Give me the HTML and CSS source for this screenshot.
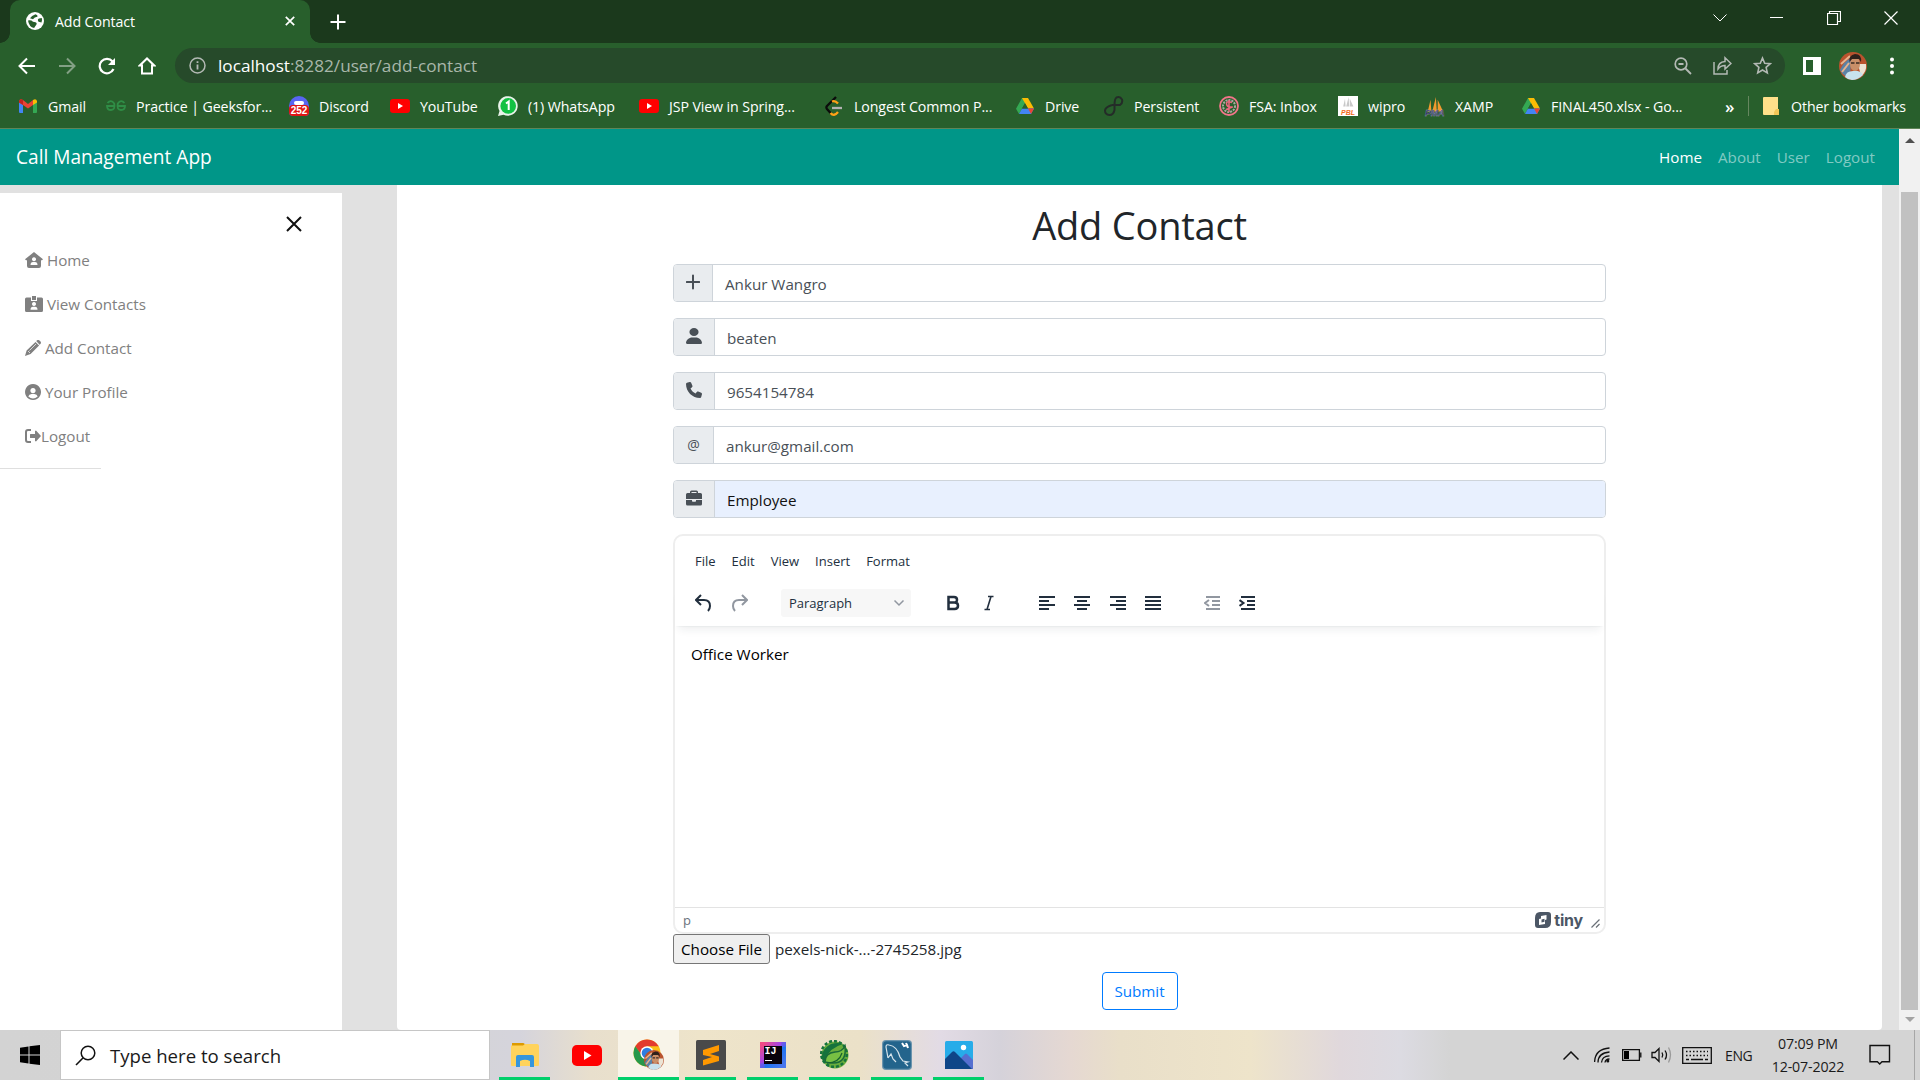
FILE: index.html
```html
<!DOCTYPE html>
<html lang="en">
<head>
<meta charset="utf-8">
<title>Add Contact</title>
<link rel="stylesheet" href="styles.css">
</head>
<body>
<svg class="defs" width="0" height="0" aria-hidden="true">
  <symbol id="i-youtube" viewBox="0 0 20 14"><rect width="20" height="14" rx="3.2" fill="#f00"/><path d="M8 4l5 3-5 3z" fill="#fff"/></symbol>
  <symbol id="i-drive" viewBox="0 0 18 16"><path d="M6 0h6l-6 10.5L3 16 0 10.7z" fill="#34a853"/><path d="M6 0h6l6 10.5h-6z" fill="#fbbc04"/><path d="M3 16l3-5.5h12L15 16z" fill="#4285f4"/><path d="M12 10.5h6L15 16z" fill="#ea4335"/><path d="M9 5.3l3 5.2H6z" fill="#285f2c"/></symbol>
  <symbol id="i-sails" viewBox="0 0 20 20"><path d="M5 3l-3 13h4zM11 0L7 16h5zM13 3l6 13h-6z"/></symbol>
  <symbol id="i-face" viewBox="0 0 28 28"><circle cx="14" cy="14" r="14" fill="#b9532e"/><path d="M1 18Q5 9 12 6l-1 20Q4 24 1 18z" fill="#5b82a6"/><path d="M2 12L11 4M3 20l7-9" stroke="#e7b38d" stroke-width="2"/><path d="M19 12l8 0q1 8-5 12z" fill="#ece4d5"/><path d="M6 25q1-6 8-6 7-1 10 4-5 5-11 5-4 0-7-3z" fill="#c8e2ee"/><ellipse cx="16" cy="12" rx="5" ry="7" fill="#c98f68"/><path d="M10.500 10q-1-7 5.500-8 7 0 6 8l-2-3h-7z" fill="#2f211b"/><path d="M12 11h3.500m1.500 0h3.500" stroke="#3a2b22" stroke-width="1.600"/></symbol>
</svg>

<header class="browser">
  <div class="tabstrip">
    <div class="tab">
      <svg width="18" height="18" viewBox="0 0 18 18"><circle cx="9" cy="9" r="9" fill="#fff"/><path d="M9.500 2.200Q5.500 3.500 4 6.200l3 1q1.500-2.600 4.500-2.500Q12 3 9.500 2.200zM2 8.500q3-.8 5 1.200l2.500.5q2 .8.600 2.800l-2 3Q3 15 2 8.500zM13 6.500q-2 1-.5 3.300l3 .7q1-2 .3-4.500z" fill="#285f2c"/></svg>
      <span class="tab-title">Add Contact</span>
      <svg width="10" height="10" viewBox="0 0 10 10" class="line"><path d="M.8.8l8.400 8.400M9.200.8L.8 9.200" stroke-width="1.700"/></svg>
    </div>
    <svg class="newtab line" width="16" height="16" viewBox="0 0 16 16"><path d="M8 .5v15M.5 8h15" stroke-width="2"/></svg>
    <div class="window-controls">
      <svg width="14" height="14" viewBox="0 0 14 14" class="line"><path d="M.5 3.500L7 10l6.500-6.500" stroke-width="1"/></svg>
      <svg width="14" height="14" viewBox="0 0 14 14" class="line"><path d="M0 6.500h13" stroke-width="1"/></svg>
      <svg width="14" height="14" viewBox="0 0 14 14" class="line"><path d="M.5 2.500h10v11H.5zM2.500 2.500v-2h11v10h-3" stroke-width="1.200"/></svg>
      <svg width="14" height="14" viewBox="0 0 14 14" class="line"><path d="M.5.5l13 13M13.500.5l-13 13" stroke-width="1.200"/></svg>
    </div>
  </div>

  <div class="toolbar">
    <div class="nav-buttons">
      <svg width="18" height="18" viewBox="0 0 18 18" class="line"><path d="M17 9H2M9 1.500L1.500 9 9 16.500" stroke-width="2"/></svg>
      <svg width="18" height="18" viewBox="0 0 18 18" class="line dim"><path d="M1 9h15M9 1.500L16.500 9 9 16.500" stroke-width="2"/></svg>
      <svg width="18" height="18" viewBox="0 0 18 18" class="line"><path d="M15.500 12A7.200 7.200 0 1 1 14.500 4.500" stroke-width="2.200"/><path d="M17 1v7h-7z" fill="#fff" stroke="none"/></svg>
      <svg width="18" height="18" viewBox="0 0 18 18" class="line"><path d="M4 16.500V8.500H1.800L9 1.500l7.200 7H14v8z" stroke-width="2"/></svg>
    </div>
    <div class="omnibox">
      <svg width="17" height="17" viewBox="0 0 17 17" class="line grey"><circle cx="8.500" cy="8.500" r="7.500" stroke-width="1.500"/><path d="M8.500 7.500v5M8.500 4.200v1.700" stroke-width="1.800"/></svg>
      <span class="url"><b>localhost</b>:8282/user/add-contact</span>
      <div class="omni-actions">
        <svg width="18" height="18" viewBox="0 0 18 18" class="line grey"><circle cx="7" cy="7" r="5.800" stroke-width="1.700"/><path d="M11.500 11.500L17 17M4.500 7h5" stroke-width="1.800"/></svg>
        <svg width="19" height="19" viewBox="0 0 19 19" class="line grey"><path d="M1 6v12h13v-4M5 13q0-7 7-7.500V1.800L18 7.500l-6 5.500V9.500Q7.500 9.500 5 13z" stroke-width="1.500"/></svg>
        <svg width="19" height="19" viewBox="0 0 19 19" class="line grey"><path d="M9.500 2l2.200 5.200 5.600.5-4.200 3.700 1.200 5.500-4.800-2.900-4.800 2.900 1.200-5.500L1.700 7.700l5.600-.5z" stroke-width="1.600"/></svg>
      </div>
    </div>
    <div class="toolbar-end">
      <svg width="18" height="18" viewBox="0 0 18 18"><path d="M0 0h18v18H0zM3 3v12h7V3z" fill="#fff" fill-rule="evenodd"/></svg>
      <svg width="28" height="28"><use href="#i-face"/></svg>
      <svg width="4" height="18" viewBox="0 0 4 18" fill="#fff"><circle cx="2" cy="2.500" r="2"/><circle cx="2" cy="9" r="2"/><circle cx="2" cy="15.500" r="2"/></svg>
    </div>
  </div>

  <div class="bookmarks">
    <a><span class="fav"><svg width="18" height="14" viewBox="0 0 18 14"><path d="M0 2v11q0 1 1 1h3V5z" fill="#4285f4"/><path d="M18 2v11q0 1-1 1h-3V5z" fill="#34a853"/><path d="M0 2q1-3 4-1l5 4 5-4v5L9 9.500 4 6 0 3.500z" fill="#ea4335"/><path d="M14 1q3-2 4 1v1.500L14 6z" fill="#fbbc04"/><path d="M0 2q1-3 4-1v5L0 3.500z" fill="#c5221f"/></svg></span>Gmail</a>
    <a><span class="fav"><svg width="20" height="12" viewBox="0 0 20 12" class="line gfg"><path d="M1.500 3Q5-1 8.200 3.500 9.500 10 5 10 1 10 1 6h8M18.500 3Q15-1 11.800 3.500 10.500 10 15 10q4 0 4-4h-8" stroke-width="1.800"/></svg></span>Practice | Geeksfor...</a>
    <a><span class="fav discord"><span class="count">252</span></span>Discord</a>
    <a><span class="fav"><svg width="20" height="14"><use href="#i-youtube"/></svg></span>YouTube</a>
    <a><span class="fav"><svg width="20" height="20" viewBox="0 0 20 20"><path d="M0 20l1.500-5A9.800 9.800 0 1 1 5.500 18.700z" fill="#e9f3ea"/><circle cx="10.200" cy="9.900" r="7.800" fill="#12c143"/><path d="M8 7.500l2.700-2V14" fill="none" stroke="#fff" stroke-width="2"/></svg></span>(1) WhatsApp</a>
    <a><span class="fav"><svg width="20" height="14"><use href="#i-youtube"/></svg></span>JSP View in Spring...</a>
    <a><span class="fav"><svg width="18" height="20" viewBox="0 0 18 20" class="line"><path d="M11 1L2 10q-1.200 1.500 0 3l4 4.500" stroke="#0b0b0b" stroke-width="2.300"/><path d="M7 5.500q3-1.500 6 2M5.500 17q3.500 4 7.500-1" stroke="#ffa116" stroke-width="2.300"/><path d="M7 12h10" stroke="#b3b3b3" stroke-width="2.300"/></svg></span>Longest Common P...</a>
    <a><span class="fav"><svg width="18" height="16"><use href="#i-drive"/></svg></span>Drive</a>
    <a><span class="fav"><svg width="20" height="20" viewBox="0 0 20 20" class="line"><path d="M8 9h8q3-2 2-5.500Q16 0 12.500 1.500 10.500 3 10.500 9v5q-1 5-5 5Q1 18.500 1 14.500 1.500 11 8 9" stroke="#242c28" stroke-width="2"/></svg></span>Persistent</a>
    <a><span class="fav"><svg width="20" height="20" viewBox="0 0 20 20" class="line"><circle cx="10" cy="10" r="9" stroke="#f2758a" stroke-width="1.800"/><circle cx="10" cy="10" r="6" stroke="#a7aaa1" stroke-width="2" stroke-dasharray="2 1"/><path d="M13 6.500Q7 4.500 7.500 8T12 11t-5 2.500M10 4v12" stroke="#ee6680" stroke-width="1.500"/></svg></span>FSA: Inbox</a>
    <a><span class="fav wipro"><svg width="14" height="12" fill="#c9c9c9"><use href="#i-sails"/></svg><i>PBL</i></span>wipro</a>
    <a><span class="fav xamp"><svg width="20" height="18" fill="#f29a2e"><use href="#i-sails"/></svg><i>PMA</i></span>XAMP</a>
    <a><span class="fav"><svg width="18" height="16"><use href="#i-drive"/></svg></span>FINAL450.xlsx - Go...</a>
    <span class="more">»</span>
    <a class="other"><span class="folder"><svg width="16" height="18" viewBox="0 0 16 18"><path d="M0 1q0-1 1-1h14v13l1 1v3q0 1-1 1H1q-1 0-1-1z" fill="#ffe08a"/><path d="M11 18v-3l2-3h3v6z" fill="#f3c758"/></svg></span>Other bookmarks</a>
  </div>
</header>

<div class="viewport">
  <div class="page">
    <nav class="navbar">
      <span class="brand">Call Management App</span>
      <div class="links"><a class="active">Home</a><a>About</a><a>User</a><a>Logout</a></div>
    </nav>
    <div class="columns">
      <aside class="sidebar">
        <div class="close"><svg width="16" height="16" viewBox="0 0 16 16"><path d="M1 1l14 14M15 1L1 15" stroke="#111" stroke-width="2"/></svg></div>
        <a><svg width="18" height="16" viewBox="0 0 18 16"><path d="M9 0l9 7.300-1 1h-1V14q0 2-2 2H4q-2 0-2-2V8.300H1l-1-1zM9 5.200a2 2 0 1 0 .01 0zM5.500 13h7q0-3-2.500-3H8q-2.500 0-2.500 3z" fill-rule="evenodd"/></svg>&nbsp;Home</a>
        <a><svg width="18" height="16" viewBox="0 0 18 16"><path d="M7 0h4v4H7zM0 3q0-1.500 1.500-1.500H6V5h6V1.500h4.500Q18 1.500 18 3v11.500Q18 16 16.500 16h-15Q0 16 0 14.500zM9 6a2 2 0 1 0 .01 0zM5.500 13.800h7q0-3-2.500-3H8q-2.500 0-2.500 3z" fill-rule="evenodd"/></svg>&nbsp;View Contacts</a>
        <a><svg width="16" height="16" viewBox="0 0 16 16"><path d="M11.200 1L12.500 0q1-.4 2 .6l1 1q.9 1 .1 2.100L14.600 4.800zM10.500 1.900l3.600 3.600-8.500 8.500L0 16l1.600-5.500z"/><path d="M3 11l2 2M4.500 10.500L11 4" stroke="#fff" stroke-width=".7"/></svg>&nbsp;Add Contact</a>
        <a><svg width="16" height="16" viewBox="0 0 16 16"><path d="M8 0a8 8 0 1 0 .01 0zM8 4a2.600 2.600 0 1 1-.01 0zM3.300 12.500q.7-2.500 3.300-2.500h2.800q2.600 0 3.300 2.500Q8 16.500 3.300 12.500z" fill-rule="evenodd"/></svg>&nbsp;Your Profile</a>
        <a><svg width="16" height="16" viewBox="0 0 16 16"><path d="M6 2H3Q1 2 1 4v8q0 2 2 2h3" fill="none" stroke="#808080" stroke-width="2"/><path d="M5.500 6H10V3l1-.5L16 8l-5 5.500-1-.5v-3H5.500Q5 10 5 9.500v-3Q5 6 5.500 6z"/></svg>Logout</a>
        <div class="rule"></div>
      </aside>

      <main class="card">
        <form class="form">
          <h1>Add Contact</h1>
          <div class="group"><span class="addon narrow"><svg width="14" height="16" viewBox="0 0 14 16"><path d="M7 1.500v13M.8 8h12.400" stroke="#495057" stroke-width="2" stroke-linecap="round"/></svg></span><span class="field">Ankur Wangro</span></div>
          <div class="group"><span class="addon"><svg width="16" height="16" viewBox="0 0 448 512" preserveAspectRatio="none"><path d="M224 256A128 128 0 1 0 224 0a128 128 0 1 0 0 256zm-45.700 48C79.800 304 0 383.800 0 482.300C0 498.700 13.300 512 29.700 512H418.300c16.400 0 29.700-13.300 29.700-29.700C448 383.800 368.200 304 269.700 304H178.300z"/></svg></span><span class="field">beaten</span></div>
          <div class="group"><span class="addon"><svg width="16" height="16" viewBox="0 0 512 512"><path d="M164.900 24.600c-7.700-18.600-28-28.500-47.400-23.200l-88 24C12.100 30.200 0 46 0 64C0 311.400 200.600 512 448 512c18 0 33.800-12.100 38.600-29.500l24-88c5.300-19.400-4.600-39.700-23.200-47.400l-96-40c-16.300-6.800-35.200-2.100-46.300 11.600L304.700 368C234.300 334.700 177.300 277.700 144 207.300L193.300 167c13.700-11.200 18.400-30 11.600-46.300l-40-96z"/></svg></span><span class="field digits">9654154784</span></div>
          <div class="group"><span class="addon mid">@</span><span class="field">ankur@gmail.com</span></div>
          <div class="group"><span class="addon"><svg width="16" height="16" viewBox="0 0 16 16"><path d="M4 3V2q0-1.500 1.500-1.500h5Q12 .5 12 2v1h2.500Q16 3 16 4.500V9H0V4.500Q0 3 1.500 3zM5.500 3h5V2h-5zM0 10h6v1q0 .8.800.8h2.400q.8 0 .8-.8v-1h6v4q0 1.500-1.500 1.500h-13Q0 15.500 0 14z" fill-rule="evenodd"/></svg></span><span class="field filled">Employee</span></div>

          <section class="editor">
            <div class="menubar"><span class="m1">File</span><span class="m2">Edit</span><span class="m3">View</span><span class="m4">Insert</span><span>Format</span></div>
            <div class="tools">
              <svg width="16" height="18" viewBox="0 0 16 18"><path d="M6 1L1 6l5 5M1.500 6H9q6 0 6 6 0 3-2 5" /></svg>
              <svg class="off redo" width="16" height="18" viewBox="0 0 16 18"><path d="M10 1l5 5-5 5M14.500 6H7q-6 0-6 6 0 3 2 5"/></svg>
              <div class="select"><span>Paragraph</span><svg class="off" width="12" height="8" viewBox="0 0 12 8"><path d="M1.500 1.500L6 6l4.500-4.500" stroke-width="1.500"/></svg></div>
              <svg class="bold" width="14" height="16" viewBox="0 0 14 16"><path d="M2.500 2H8q3 0 3 2.800T8 7.600H2.500zM2.500 7.600h6q3.500 0 3.500 3.200T8.500 14h-6z" stroke-width="2.500"/></svg>
              <svg class="italic" width="10" height="16" viewBox="0 0 10 16"><path d="M4 1.500h5.500M.5 14.500H6M7 1.500L3 14.500" stroke-width="1.600"/></svg>
              <svg class="al" width="16" height="14" viewBox="0 0 16 14"><path d="M0 1h16M0 5h10M0 9h16M0 13h10"/></svg>
              <svg width="16" height="14" viewBox="0 0 16 14"><path d="M0 1h16M3 5h10M0 9h16M3 13h10"/></svg>
              <svg width="16" height="14" viewBox="0 0 16 14"><path d="M0 1h16M6 5h10M0 9h16M6 13h10"/></svg>
              <svg width="16" height="14" viewBox="0 0 16 14"><path d="M0 1h16M0 5h16M0 9h16M0 13h16"/></svg>
              <svg class="off ind" width="16" height="14" viewBox="0 0 16 14"><path d="M2 1h14M8 5h8M8 9h8M2 13h14M5 4L1 7l4 3"/></svg>
              <svg width="16" height="14" viewBox="0 0 16 14"><path d="M2 1h14M8 5h8M8 9h8M2 13h14M.5 4l4 3-4 3"/></svg>
            </div>
            <div class="content">Office Worker</div>
            <div class="status">
              <span>p</span>
              <span class="tiny"><svg width="16" height="16" viewBox="0 0 16 16"><path d="M5 0h8q3 0 3 3v7q0 6-6 6H3q-3 0-3-3V6q0-6 5-6zM6 4l5.500-1v4.500L10 8v4l-6 1V7l2-.5zM6.500 7.500v3l3-.8v-3z" fill-rule="evenodd"/></svg><b>tiny</b></span>
              <svg class="grip" width="9" height="9" viewBox="0 0 9 9"><path d="M.5 8.500l8-8M5 8.500L8.500 5" stroke="#6a7078" stroke-width="1.200"/></svg>
            </div>
          </section>

          <div class="file"><span class="choose">Choose File</span><span class="filename">pexels-nick-...-2745258.jpg</span></div>
          <div class="actions"><span class="submit">Submit</span></div>
        </form>
      </main>
    </div>
  </div>
  <div class="scrollbar"><i class="up"></i><div class="thumb"></div><i class="down"></i></div>
</div>

<footer class="taskbar">
  <div class="start"><svg width="20" height="20" viewBox="0 0 20 20"><path d="M0 2.700L8.500 1.400v8.100H0zM9.500 1.300L20 0v9.500H9.500zM0 10.500h8.500v8.100L0 17.300zM9.500 10.500H20V20L9.500 18.700z"/></svg></div>
  <div class="search"><svg width="21" height="21" viewBox="0 0 21 21"><circle cx="13" cy="8" r="6.800" fill="none" stroke="#111" stroke-width="1.500"/><path d="M8.200 12.800L1 20" stroke="#111" stroke-width="1.600"/></svg><span>Type here to search</span></div>
  <div class="apps">
    <div class="app open"><svg width="28" height="24" viewBox="0 0 28 24"><path d="M1 0h11q2 0 2 3H1z" fill="#dd9a00"/><path d="M0 2.500h12L14 1h12q2 0 2 2v19q0 1-1 1H1q-1 0-1-1z" fill="#ffd35c"/><path d="M5 24V14q0-2 2-2h14q2 0 2 2v10h-4v-6q-5-2.500-10 0v6z" fill="#3696dc"/></svg></div>
    <div class="app"><svg width="30" height="21"><use href="#i-youtube"/></svg></div>
    <div class="app open active"><svg width="32" height="32" viewBox="0 0 32 32"><circle cx="14" cy="14" r="13.500" fill="#fbc116"/><path d="M2.300 7.300A13.500 13.500 0 0 1 25.700 7.300H14L9 17z" fill="#e33b2e"/><path d="M2.300 7.300A13.500 13.500 0 0 0 13 27.500L19 17l-10-.5z" fill="#26984b"/><circle cx="14" cy="14" r="6.700" fill="#fff"/><circle cx="14" cy="14" r="5.300" fill="#2f7de1"/><svg x="11" y="11" width="20" height="20"><use href="#i-face"/></svg></svg></div>
    <div class="app open"><svg width="30" height="30" viewBox="0 0 30 30"><rect width="30" height="30" rx="1.500" fill="#4a4a4a"/><path d="M7 10l16-5v6l-9 3 9 2.500V21L7 25.500V20l9-3-9-2z" fill="#ff9800"/></svg></div>
    <div class="app open"><span class="ij">IJ</span></div>
    <div class="app open"><svg width="30" height="30" viewBox="0 0 30 30"><circle cx="15" cy="15" r="13.500" fill="#69ad3c"/><circle cx="14" cy="14" r="12.800" fill="none" stroke="#15733c" stroke-width="2.500" stroke-dasharray="3 2" pathLength="80"/><path d="M3 22Q-1 10 11 4q7-2 12 0-14 4-17 15z" fill="#15733c"/><path d="M5 22Q5 13 15 12q7 0 10-6 2 17-12 17-4 0-8-1z" fill="#78c043" stroke="#1b6b38" stroke-width="1.500"/><path d="M7 23q12 0 15-10" stroke="#17612f" stroke-width="1.200" fill="none"/></svg></div>
    <div class="app open"><svg width="30" height="30" viewBox="0 0 30 30"><rect width="30" height="30" rx="4" fill="#6b94ad"/><rect x="1.200" y="1.200" width="27.600" height="27.600" rx="3" fill="#23648c"/><path d="M6 18L4 7q0-3 3-2 8 1 11 12l3 4 5 1-3 1 3 3M6 18l3-4 2 5 3 3" fill="none" stroke="#d8e5ec" stroke-width="1.200"/><path d="M20 3l2 3 3-1 1 3-2-5" fill="none" stroke="#fff" stroke-width="2"/></svg></div>
    <div class="app open"><svg width="28" height="28" viewBox="0 0 28 28"><rect width="28" height="28" rx="1.500" fill="#27ace9"/><path d="M16 17l4-4q1-1 2 0l6 6v9H16z" fill="#566fd0"/><path d="M0 18l7-7q1.500-1.500 3 0l17 17H0z" fill="#0f4688"/><circle cx="18.500" cy="6.500" r="2.700" fill="#fff"/></svg></div>
  </div>
  <div class="tray">
    <svg class="chev" width="16" height="9" viewBox="0 0 16 9"><path d="M.5 8.500L8 1l7.500 7.500" stroke-width="1.500"/></svg>
    <svg class="wifi" width="16" height="16" viewBox="0 0 16 16"><path d="M.6 15Q1 2 15.500 1M4 15.500Q4 6 15.500 5M7.500 15.500Q8 9 15.500 8.800M11 15.500q.3-3.300 4.500-3.500"/><circle cx="13.800" cy="14" r="1.500" fill="#111" stroke="none"/></svg>
    <svg class="batt" width="20" height="12" viewBox="0 0 20 12"><path d="M.6.600h16.800v10.800H.6zM18.800 3.500v5"/><path d="M2 2h5v8H2z" fill="#000" stroke="none"/></svg>
    <svg class="spk" width="22" height="18" viewBox="0 0 22 18"><path d="M1 6.500h3L8 2.500v13l-4-4H1zM11 6.500q1.500 2.500 0 5M14 4.500q3 4.500 0 9"/><path d="M17.500 1.500q4 7 0 15" stroke="#999"/></svg>
    <svg class="kbd" width="30" height="17" viewBox="0 0 30 17"><path d="M.7.700h28.600v15.600H.7z"/><path d="M4 4.500h22M4 8.500h22" stroke-dasharray="1.500 2"/><path d="M4 12.500h3m2 0h12m2 0h3"/></svg>
    <span class="lang">ENG</span>
    <div class="clock"><span>07:09 PM</span><span>12-07-2022</span></div>
    <svg class="note" width="22" height="22" viewBox="0 0 22 22"><path d="M1 1.500h19.500v16.300H13L10.700 20l-2.300-2.200H1z" stroke-width="1.400"/></svg>
    <div class="peek"></div>
  </div>
</footer>
</body>
</html>
```
FILE: styles.css
```css
* { box-sizing: border-box; }
body {
  margin: 0;
  width: 1920px;
  height: 1080px;
  overflow: hidden;
  display: flex;
  flex-direction: column;
  font-family: "Open Sans", "Noto Sans", sans-serif;
  font-size: 15.200px;
  color: #212529;
}
svg { display: block; flex: none; }
.defs { position: absolute; }
.line { fill: none; stroke: #fff; }
.line.grey { stroke: #b3b9b4; }
.line.dim { stroke: #83a085; }
.line.gfg { stroke: #2f8d46; }

/* browser chrome */
.browser { height: 129px; background: #285f2c; color: #fff; border-bottom: 1px solid #5f8558; flex: none; }
.tabstrip { height: 43px; background: #1b391c; display: flex; align-items: center; }
.tab {
  position: relative;
  width: 300px; height: 43px;
  margin-left: 10px; padding: 0 15px 1px 16px;
  background: #285f2c;
  border-radius: 10px 10px 0 0;
  display: flex; align-items: center;
}
.tab::before, .tab::after { content: ""; position: absolute; bottom: 0; width: 10px; height: 10px; }
.tab::before { left: -10px; background: radial-gradient(circle at 0 0, #1b391c 9.500px, #285f2c 10px); }
.tab::after { right: -10px; background: radial-gradient(circle at 100% 0, #1b391c 9.500px, #285f2c 10px); }
.tab-title { flex: 1; margin-left: 11px; font-size: 14.200px; letter-spacing: -.1px; }
.newtab { margin-left: 20px; }
.window-controls { margin-left: auto; display: flex; gap: 43px; padding: 0 22px 7px 0; }
.toolbar { height: 45px; display: flex; align-items: center; }
.nav-buttons { width: 175px; padding-left: 18px; display: flex; gap: 22px; }
.omnibox {
  width: 1610px; height: 35px;
  margin-top: 0;
  padding: 0 13px 0 14px;
  border-radius: 18px;
  background: #264a2a;
  display: flex; align-items: center;
}
.url { margin-left: 12px; font-size: 17.200px; color: #a9b7aa; white-space: nowrap; }
.url b { font-weight: 400; color: #fff; }
.omni-actions { margin-left: auto; display: flex; align-items: center; gap: 21px; }
.toolbar-end { margin-left: 18px; display: flex; align-items: center; gap: 18px; }
.toolbar-end svg:last-child { margin-left: 5px; }
.bookmarks {
  height: 36px; padding-left: 18px;
  display: grid; align-items: center;
  grid-template-columns: 88px 183px 101px 108px 141px 185px 191px 89px 115px 119px 87px 96px 203px 24px 158px;
  font-size: 14.200px; letter-spacing: -.1px;
}
.bookmarks a { display: flex; align-items: center; white-space: nowrap; }
.fav { width: 20px; height: 20px; margin-right: 10px; display: flex; align-items: center; justify-content: center; flex: none; }
.discord { position: relative; background: #5865f2; border-radius: 10px 10px 4px 4px; }
.discord::before { content: ""; position: absolute; top: 5px; width: 10px; height: 4px; border-radius: 3px; background: #fff; }
.count { position: absolute; left: 0; bottom: 0; width: 20px; height: 11px; border-radius: 4px; background: #e01414; font: 700 10px/11px "Liberation Sans", sans-serif; letter-spacing: 0; text-align: center; }
.wipro { background: #fff; flex-direction: column; }
.fav i { font: italic 700 7px/7px "Liberation Sans", sans-serif; letter-spacing: 0; color: #f26b1d; }
.xamp { position: relative; }
.xamp i { position: absolute; bottom: -1px; left: 0; font-size: 9px; line-height: 8px; letter-spacing: -.3px; color: #2e2d5c; -webkit-text-stroke: .3px #aaa6cc; }
.more { font-size: 17px; font-weight: 600; padding-left: 1px; }
.other { height: 20px; border-left: 1px solid #66875f; padding-left: 14px; }
.folder { margin-right: 12px; }

/* page */
.viewport { flex: 1; display: flex; min-height: 0; }
.page { width: 1899px; display: flex; flex-direction: column; background: #e1e1e1; }
.navbar { height: 56px; flex: none; background: #009688; display: flex; justify-content: space-between; align-items: center; padding: 0 24px 0 16px; }
.brand { font-size: 19.100px; color: #fff; padding-bottom: 1px; }
.links { display: flex; gap: 16px; color: #80cac3; }
.links .active { color: #fff; }
.columns { flex: 1; display: flex; min-height: 0; }
.sidebar { width: 342px; margin-top: 8px; background: #fff; color: #808080; fill: #808080; }
.close { padding: 23px 40px 0 0; height: 45px; display: flex; justify-content: flex-end; }
.sidebar a { height: 44px; padding-left: 25px; display: flex; align-items: center; }
.rule { width: 101px; height: 1px; margin-top: 10px; background: #dfdfdf; }
.card { width: 1485px; margin-left: 55px; background: #fff; border-radius: 0 0 4px 4px; padding-left: 276px; }
.form { width: 933px; }
h1 { margin: 0; padding-top: 14px; height: 79px; text-align: center; font-size: 38px; line-height: 52px; font-weight: 500; letter-spacing: -.2px; }
.group { height: 38px; margin-bottom: 16px; display: flex; border: 1px solid #ced4da; border-radius: 4px; overflow: hidden; color: #495057; }
.addon { width: 41px; background: #e9ecef; border-right: 1px solid #ced4da; display: flex; align-items: center; justify-content: center; fill: #495057; padding-bottom: 2px; font-size: 14px; }
.addon.narrow { width: 39px; }
.addon.mid { width: 40px; }
.field { flex: 1; padding: 2px 12px 0; display: flex; align-items: center; }
.filled { background: #e8f0fe; color: #111; }

.editor { height: 400px; border: 2px solid #eee; border-radius: 10px; display: flex; flex-direction: column; color: #222f3e; margin-top: 0; }
.menubar { height: 48px; padding: 2px 0 0 20px; display: flex; align-items: center; font-size: 13px; }
.menubar span { margin-right: 16px; }
.tools { height: 42px; padding: 0 20px 4px; display: flex; align-items: center; box-shadow: 0 2px 2px -2px rgba(34,47,62,.1), 0 8px 8px -4px rgba(34,47,62,.07); }
.tools svg { fill: none; stroke: #222f3e; stroke-width: 2; margin-right: 19.300px; }
.tools .off { stroke: #9197a0; }
.tools svg.redo { margin: 0 33px 0 1.700px; }
.select { width: 130px; height: 28px; padding: 0 6px 0 8px; background: #f7f7f7; border-radius: 3px; display: flex; align-items: center; justify-content: space-between; font-size: 13px; }
.tools .select svg { margin: 0; }
.tools svg.bold { margin: 0 24px 0 35px; }
.tools svg.italic { margin-right: 45px; }
.tools svg.ind { margin-left: 24px; }
.content { flex: 1; padding: 17px 16px; line-height: 22px; color: #000; }
.status { height: 25px; border-top: 1px solid #e3e3e3; padding: 0 4px 0 8px; display: flex; align-items: center; font-size: 13px; color: #6a727c; }
.tiny { margin-left: auto; display: flex; align-items: center; gap: 3px; fill: #4c5766; color: #4c5766; }
.tiny b { font: 700 16px/16px "Inter", sans-serif; letter-spacing: -.2px; }
.grip { margin: 6px 0 0 8px; }
.file { height: 30px; display: flex; align-items: center; gap: 5px; }
.choose { width: 97px; height: 30px; border: 1px solid #767676; border-radius: 3px; background: #efefef; color: #000; display: flex; align-items: center; justify-content: center; white-space: nowrap; }
.actions { display: flex; justify-content: center; padding-top: 8px; }
.submit { width: 76px; height: 38px; border: 1px solid #007bff; border-radius: 4px; color: #007bff; display: flex; align-items: center; justify-content: center; }

.scrollbar { width: 21px; background: #f1f1f1; display: flex; flex-direction: column; align-items: center; padding: 9px 0 8px; }
.scrollbar i { border: 5px solid transparent; height: 0; }
.up { border-top: 0 !important; border-bottom-color: #505050 !important; }
.down { border-bottom: 0 !important; border-top-color: #a3a3a3 !important; }
.thumb { width: 17px; flex: 1; margin: 49px 0 7px; background: #c1c1c1; }

/* taskbar */
.taskbar {
  height: 50px; flex: none; display: flex; color: #1a1a1a;
  background: linear-gradient(90deg, #d3d3d3 0, #d4d4d4 420px, #d5d4dc 520px, #e8dfcd 590px, #eee4ca 700px, #ebe1c8 860px, #e2dbe5 940px, #d5d2da 1000px, #e5d8d2 1070px, #e9dfc9 1120px, #eee4ca 1250px, #e0d8dc 1340px, #dcdbe2 1400px, #d4d4d4 1450px);
}
.start { width: 60px; display: flex; align-items: center; justify-content: center; }
.search { width: 430px; border: 1px solid #c6c6c6; background: #fff; padding-left: 14px; display: flex; align-items: center; gap: 14px; font-size: 18.600px; }
.apps { display: flex; margin-left: 9px; gap: 11px; }
.app { width: 51px; display: flex; align-items: center; justify-content: center; border-bottom: 3px solid transparent; padding-top: 3px; }
.app.open { border-color: #00cf6b; }
.app.active { width: 61px; background: #f8f4e9; margin: 0 -5px; }
.ij { width: 26px; height: 26px; border: 4px solid; border-image: linear-gradient(135deg, #f34b82, #a345e6 45%, #1d74ef 55%, #4b77ee) 1; background: #08030b; color: #fff; font: 700 10px/11px "Liberation Mono", monospace; padding-left: 1px; }
.ij::after { content: ""; display: block; width: 7px; height: 1px; margin-top: 3px; background: #fff; }
.tray { margin-left: auto; display: flex; align-items: center; }
.tray svg { fill: none; stroke: #111; stroke-width: 1.300; }
.wifi { margin-left: 15px; }
.batt { margin-left: 12px; }
.spk { margin-left: 9px; }
.kbd { margin-left: 9px; }
.lang { margin-left: 13px; width: 28px; font-size: 14px; letter-spacing: -.4px; }
.clock { width: 76px; margin-left: 17px; display: flex; flex-direction: column; align-items: center; font-size: 14.200px; line-height: 23px; letter-spacing: -.15px; white-space: nowrap; }
.note { margin-left: 23px; }
.peek { width: 6px; height: 50px; margin-left: 23px; border-left: 1px solid #a6a6a6; }
```
